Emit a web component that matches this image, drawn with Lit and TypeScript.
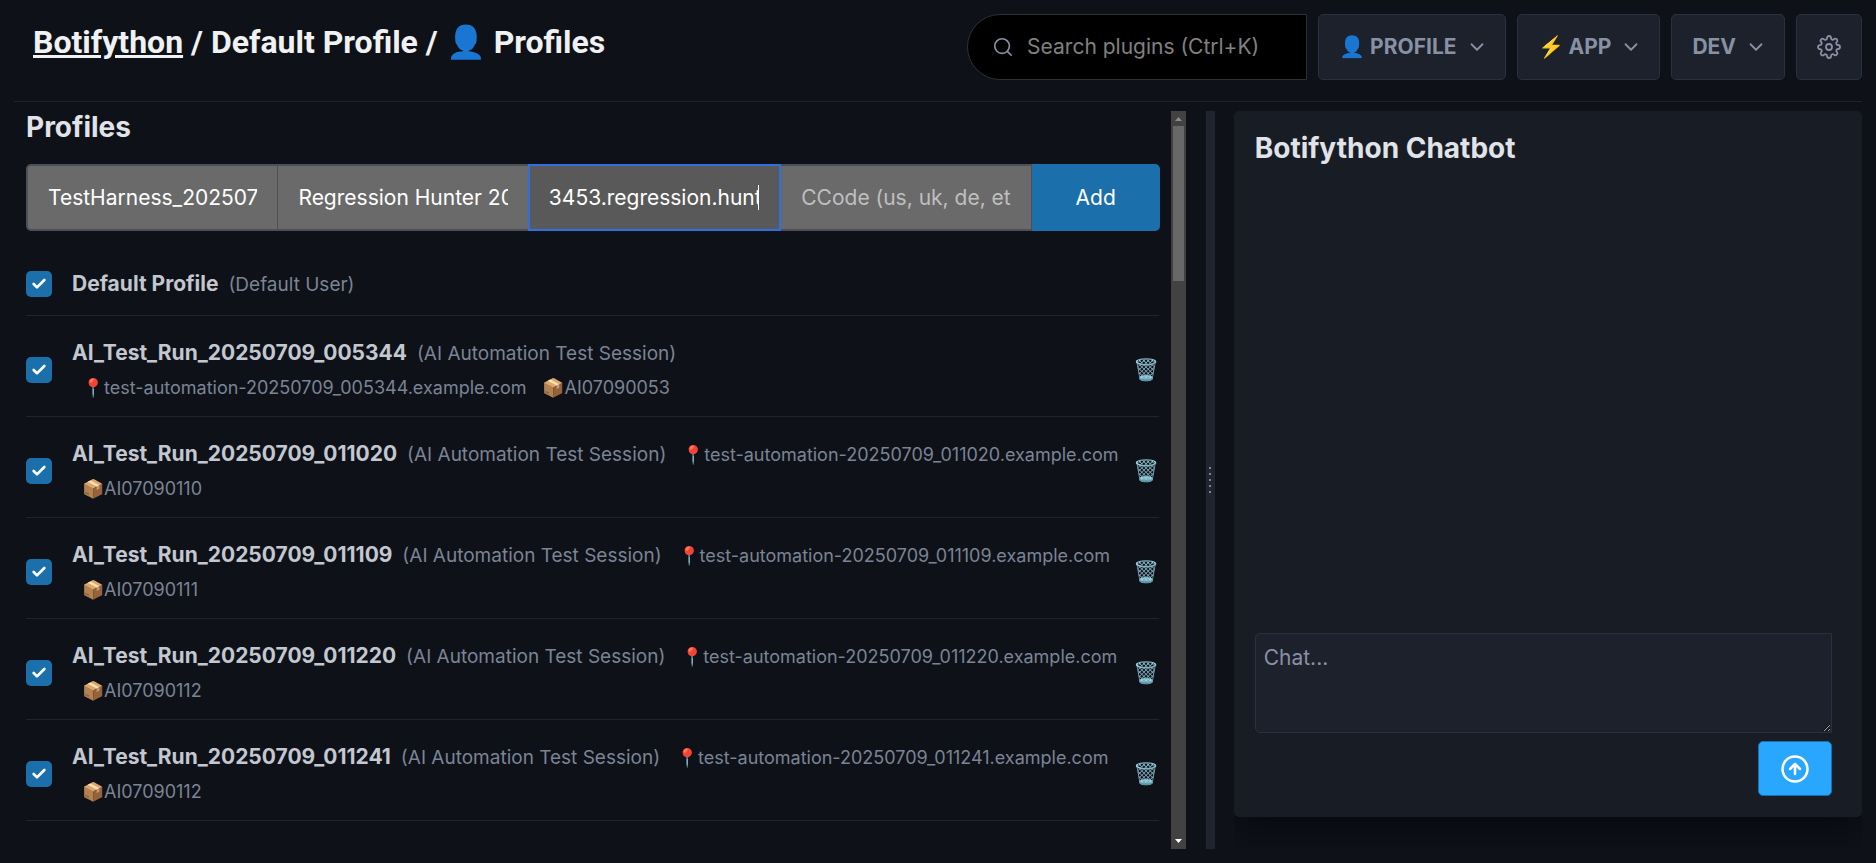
import { LitElement, html, css, svg } from "lit";
import { customElement, state } from "lit/decorators.js";

interface Profile {
  name: string;
  real: string;
  address?: string;
  code?: string;
  active: boolean;
}

const session = (stamp: string, code: string): Profile => ({
  name: `AI_Test_Run_20250709_${stamp}`,
  real: "AI Automation Test Session",
  address: `test-automation-20250709_${stamp}.example.com`,
  code,
  active: true,
});

const chevron = svg`<path d="M6 9l6 6 6-6" />`;

@customElement("profile-row")
export class ProfileRow extends LitElement {
  static properties = { profile: { attribute: false } };
  declare profile: Profile;

  static styles = css`
    :host {
      display: flex;
      align-items: center;
      padding: 20px 0 12px;
      border-bottom: 1px solid #20242e;
      color: #7b8495;
    }
    :host(:first-of-type) {
      padding-bottom: 14px;
    }
    .tick {
      appearance: none;
      flex: none;
      width: 26px;
      height: 26px;
      margin: 0 20px 0 0;
      border-radius: 5px;
      background: #6a6a6a;
    }
    .tick:checked {
      background: #1b6fab
        url("data:image/svg+xml,%3Csvg xmlns='http://www.w3.org/2000/svg' viewBox='0 0 24 24' fill='none' stroke='white' stroke-width='4' stroke-linecap='round' stroke-linejoin='round'%3E%3Cpath d='M20 6L9 17l-5-5'/%3E%3C/svg%3E")
        center / 16px no-repeat;
    }
    .text {
      flex: 1;
      min-width: 0;
      line-height: 33px;
    }
    .name {
      font-size: 21px;
      font-weight: 700;
      color: #c2c7d0;
    }
    .real {
      font-size: 19px;
      margin-left: 4px;
    }
    .detail {
      display: inline-block;
      font-size: 18px;
      margin-left: 10px;
    }
    .trash {
      flex: none;
      border: 0;
      padding: 0;
      background: none;
      font: inherit;
      font-size: 21px;
      line-height: 26px;
      cursor: pointer;
    }
  `;

  render() {
    const p = this.profile;
    return html`
      <input class="tick" type="checkbox" id="active" .checked=${p.active} aria-label="Activate ${p.name}" />
      <label class="text" for="active">
        <span class="name">${p.name}</span>
        <span class="real">(${p.real})</span>
        ${p.address ? html`<span class="detail">📍${p.address}</span>` : ""}
        ${p.code ? html`<span class="detail">📦${p.code}</span>` : ""}
      </label>
      ${p.address ? html`<button class="trash" aria-label="Delete ${p.name}">🗑️</button>` : ""}
    `;
  }
}

@customElement("app-root")
export class AppRoot extends LitElement {
  static styles = css`
    :host {
      display: flex;
      flex-direction: column;
      box-sizing: border-box;
      height: 100vh;
      padding: 14px;
      overflow: hidden;
      background: #0e1118;
      color: #c2c7d0;
      font: 400 21px/32px Inter, "Noto Sans", sans-serif;
    }
    * {
      box-sizing: border-box;
    }
    button,
    input,
    textarea {
      font: inherit;
      margin: 0;
    }
    svg {
      display: block;
      fill: none;
      stroke: currentColor;
      stroke-linecap: round;
      stroke-linejoin: round;
    }
    h1,
    h2 {
      margin: 0;
    }
    header {
      display: flex;
      justify-content: space-between;
      padding-bottom: 21px;
      border-bottom: 1px solid #20242e;
    }
    h1 {
      padding: 8px 0 0 19px;
      font: 700 32px/40px Roboto, sans-serif;
      color: #f0f1f3;
      white-space: nowrap;
    }
    h1 a {
      color: inherit;
      text-decoration: underline;
      text-decoration-thickness: 3px;
    }
    nav {
      display: flex;
      gap: 11px;
    }
    .search {
      display: flex;
      align-items: center;
      gap: 13px;
      width: 340px;
      height: 66px;
      padding: 0 24px;
      border: 1px solid #2f3033;
      border-radius: 33px 0 0 33px;
      background: #000;
      color: #8891a4;
    }
    .search svg {
      flex: none;
    }
    .search input {
      flex: 1;
      min-width: 0;
      padding: 0;
      border: 0;
      outline: 0;
      background: none;
      color: #fff;
    }
    .search input::placeholder {
      color: #808080;
      opacity: 1;
    }
    .menu {
      display: flex;
      align-items: center;
      gap: 9px;
      height: 66px;
      padding: 0 17px 0 20px;
      border: 1px solid #2a3040;
      border-radius: 5px;
      background: #1c212c;
      color: #8891a4;
      font-weight: 700;
      white-space: nowrap;
    }
    .menu.icon {
      padding: 0 20px;
    }
    h2 {
      font-size: 28px;
      font-weight: 700;
      line-height: 32px;
      color: #e0e3e7;
    }
    main {
      display: flex;
      flex: 1;
      min-height: 0;
      margin-top: 9px;
    }
    .left {
      flex: 1;
      display: flex;
      min-width: 0;
    }
    .scroller {
      flex: 1;
      min-width: 0;
      overflow: auto;
      scrollbar-width: none;
      padding: 0 12px;
    }
    .bar {
      display: flex;
      flex-direction: column;
      align-items: center;
      width: 15px;
      margin-right: 20px;
      background: #424242;
    }
    .bar svg {
      flex: none;
      stroke: none;
      fill: #fff;
    }
    .bar .up {
      fill: #8c8c8c;
    }
    .thumb {
      flex: 0 0 21%;
      width: 11px;
      margin-bottom: auto;
      background: #686868;
    }
    form.add {
      display: flex;
      height: 67px;
      margin: 21px -1px 16px 0;
    }
    .field {
      position: relative;
      flex: 1;
      min-width: 0;
      display: flex;
      background: #6a6a6a;
      border: solid #4d4f54;
      border-width: 2px 1px 2px 0;
    }
    .field:first-child {
      border-radius: 5px 0 0 5px;
      border-left-width: 2px;
    }
    .field.active {
      z-index: 1;
      margin: 0 0 0 -1px;
      background: #595959;
      border: 2px solid #2f6fe0;
    }
    .field input {
      width: 100%;
      padding: 0;
      margin: 0 20px;
      border: 0;
      outline: 0;
      border-radius: 0;
      background: none;
      color: #fff;
    }
    .field.active input {
      margin: 0 20px 0 19px;
    }
    .field input::placeholder {
      color: #bfbfbf;
      opacity: 1;
    }
    .caret {
      position: absolute;
      right: 20px;
      top: 19px;
      bottom: 19px;
      width: 1px;
      background: #fff;
    }
    .submit {
      width: 128px;
      border: 0;
      border-radius: 0 5px 5px 0;
      background: #1b6fab;
      color: #fff;
    }
    .splitter {
      display: flex;
      flex-direction: column;
      align-items: center;
      justify-content: center;
      gap: 4px;
      width: 9px;
      background: #20242e;
    }
    .dot {
      width: 2px;
      height: 2px;
      background: #7b8495;
    }
    .right {
      flex: 0 0 34%;
      margin-left: 19px;
      padding-bottom: 32px;
      overflow: hidden;
    }
    .card {
      display: flex;
      flex-direction: column;
      height: 100%;
      padding: 21px 30px 21px 21px;
      border-radius: 5px;
      background: #181c24;
      box-shadow: 0 8px 36px rgba(0, 0, 0, 0.5);
    }
    .log {
      flex: 1;
    }
    .chat {
      display: flex;
      flex-direction: column;
      align-items: flex-end;
      gap: 8px;
    }
    textarea {
      display: block;
      width: 100%;
      height: 100px;
      padding: 8px;
      border: 1px solid #2a3040;
      border-radius: 5px 0 0 5px;
      outline: 0;
      background: #1c212c;
      color: #e0e3e7;
      resize: vertical;
    }
    textarea::placeholder {
      color: #8891a4;
      opacity: 1;
    }
    .send {
      display: grid;
      place-items: center;
      width: 74px;
      height: 55px;
      padding: 0;
      border: 1px solid #1b6fab;
      border-radius: 5px;
      background: #29a7ff;
      color: #fff;
    }
  `;

  @state() private profiles: Profile[] = [
    { name: "Default Profile", real: "Default User", active: true },
    session("005344", "AI07090053"),
    session("011020", "AI07090110"),
    session("011109", "AI07090111"),
    session("011220", "AI07090112"),
    session("011241", "AI07090112"),
    session("011301", "AI07090113"),
  ];

  private menu(label: string) {
    return html`<button class="menu">
      ${label}
      <svg width="22" height="22" viewBox="0 0 24 24" stroke-width="2">${chevron}</svg>
    </button>`;
  }

  render() {
    return html`
      <header>
        <h1><a href="#">Botifython</a> / Default Profile / 👤 Profiles</h1>
        <nav>
          <label class="search">
            <svg width="22" height="22" viewBox="0 0 24 24" stroke-width="1.8">
              <circle cx="11" cy="11" r="8" />
              <path d="M21 21l-4-4" />
            </svg>
            <input type="text" placeholder="Search plugins (Ctrl+K)" aria-label="Search plugins" />
          </label>
          ${this.menu("👤 PROFILE")} ${this.menu("⚡ APP")} ${this.menu("DEV")}
          <button class="menu icon" aria-label="Settings">
            <svg width="24" height="24" viewBox="0 0 24 24" stroke-width="1.8">
              <circle cx="12" cy="12" r="3" />
              <path
                d="M19.4 15a1.65 1.65 0 0 0 .33 1.82l.06.06a2 2 0 1 1-2.83 2.83l-.06-.06a1.65 1.65 0 0 0-1.82-.33 1.65 1.65 0 0 0-1 1.51V21a2 2 0 0 1-4 0v-.09A1.65 1.65 0 0 0 9 19.4a1.65 1.65 0 0 0-1.82.33l-.06.06a2 2 0 1 1-2.83-2.83l.06-.06a1.65 1.65 0 0 0 .33-1.82 1.65 1.65 0 0 0-1.51-1H3a2 2 0 0 1 0-4h.09A1.65 1.65 0 0 0 4.6 9a1.65 1.65 0 0 0-.33-1.82l-.06-.06a2 2 0 1 1 2.83-2.83l.06.06a1.65 1.65 0 0 0 1.82.33H9a1.65 1.65 0 0 0 1-1.51V3a2 2 0 0 1 4 0v.09a1.65 1.65 0 0 0 1 1.51 1.65 1.65 0 0 0 1.82-.33l.06-.06a2 2 0 1 1 2.83 2.83l-.06.06a1.65 1.65 0 0 0-.33 1.82V9a1.65 1.65 0 0 0 1.51 1H21a2 2 0 0 1 0 4h-.09a1.65 1.65 0 0 0-1.51 1z"
              />
            </svg>
          </button>
        </nav>
      </header>
      <main>
        <section class="left">
          <div class="scroller">
            <h2>Profiles</h2>
            <form class="add" @submit=${(e: Event) => e.preventDefault()}>
              <div class="field"><input type="text" aria-label="Name" value="TestHarness_202507" /></div>
              <div class="field"><input type="text" aria-label="Real name" value="Regression Hunter 2025" /></div>
              <div class="field active">
                <input type="text" aria-label="Address" value="3453.regression.hunt" />
                <span class="caret"></span>
              </div>
              <div class="field"><input type="text" aria-label="Code" placeholder="CCode (us, uk, de, etc)" /></div>
              <button class="submit" type="submit">Add</button>
            </form>
            ${this.profiles.map((p) => html`<profile-row .profile=${p}></profile-row>`)}
          </div>
          <div class="bar">
            <svg class="up" width="15" height="15" viewBox="0 0 15 15"><path d="M4 10h7L7.500 6z" /></svg>
            <div class="thumb"></div>
            <svg width="15" height="15" viewBox="0 0 15 15"><path d="M4 5h7L7.500 9z" /></svg>
          </div>
        </section>
        <div class="splitter" role="separator" aria-orientation="vertical">
          ${[0, 1, 2, 3, 4].map(() => html`<span class="dot"></span>`)}
        </div>
        <section class="right">
          <div class="card">
            <h2>Botifython Chatbot</h2>
            <div class="log"></div>
            <form class="chat" @submit=${(e: Event) => e.preventDefault()}>
              <textarea placeholder="Chat..." aria-label="Chat"></textarea>
              <button class="send" aria-label="Send">
                <svg width="30" height="30" viewBox="0 0 24 24" stroke-width="2">
                  <circle cx="12" cy="12" r="10" />
                  <path d="M16 12l-4-4-4 4M12 16V8" />
                </svg>
              </button>
            </form>
          </div>
        </section>
      </main>
    `;
  }
}
